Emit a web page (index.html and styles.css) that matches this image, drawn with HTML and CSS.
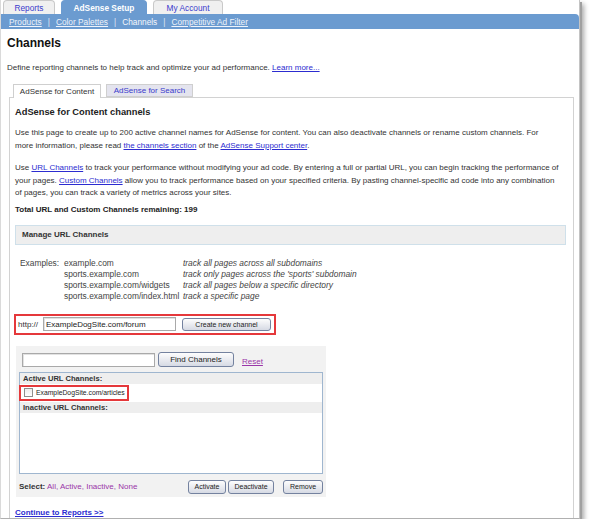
FILE: index.html
```html
<!DOCTYPE html>
<html>
<head>
<meta charset="utf-8">
<title>Channels</title>
<link rel="stylesheet" href="styles.css">
</head>
<body>
<div class="window">
  <div class="toptabs">
    <div class="ttab t1">Reports</div>
    <div class="ttab t2 on">AdSense Setup</div>
    <div class="ttab t3">My Account</div>
  </div>
  <div class="nav">
    <a class="navlink" href="#">Products</a><span class="sep">|</span>
    <a class="navlink" href="#">Color Palettes</a><span class="sep">|</span>
    <span class="navcur">Channels</span><span class="sep">|</span>
    <a class="navlink" href="#">Competitive Ad Filter</a>
  </div>
  <div class="main">
    <h1 class="title">Channels</h1>
    <div class="desc">Define reporting channels to help track and optimize your ad performance. <a class="link" href="#">Learn more...</a></div>
  </div>
  <div class="panelwrap">
    <div class="subtabs">
      <div class="stab s1 on">AdSense for Content</div>
      <div class="stab s2">AdSense for Search</div>
    </div>
    <div class="panel">
      <div class="sechead">AdSense for Content channels</div>
      <p class="para">Use this page to create up to 200 active channel names for AdSense for content. You can also deactivate channels or rename custom channels. For<br>more information, please read <a class="link" href="#">the channels section</a> of the <a class="link" href="#">AdSense Support center</a>.</p>
      <p class="para p2">Use <a class="link" href="#">URL Channels</a> to track your performance without modifying your ad code. By entering a full or partial URL, you can begin tracking the performance of<br>your pages. <a class="link" href="#">Custom Channels</a> allow you to track performance based on your specified criteria. By pasting channel-specific ad code into any combination<br>of pages, you can track a variety of metrics across your sites.</p>
      <div class="total">Total URL and Custom Channels remaining: 199</div>
      <div class="managebox">Manage URL Channels</div>
      <div class="examples">
        <span>Examples:</span><span>example.com</span><span class="ex">track all pages across all subdomains</span>
        <span></span><span>sports.example.com</span><span class="ex">track only pages across the 'sports' subdomain</span>
        <span></span><span>sports.example.com/widgets</span><span class="ex">track all pages below a specific directory</span>
        <span></span><span>sports.example.com/index.html</span><span class="ex">track a specific page</span>
      </div>
      <div class="createbox">
        <span class="http">http://</span>
        <span class="input urlinput">ExampleDogSite.com/forum</span>
        <span class="btn createbtn">Create new channel</span>
      </div>
      <div class="findbox">
        <div class="findrow">
          <span class="input findinput"></span>
          <span class="btn findbtn">Find Channels</span>
          <a class="visited reset" href="#">Reset</a>
        </div>
        <div class="listbox">
          <div class="listhead">Active URL Channels:</div>
          <div class="itemrow">
            <div class="item"><span class="check"></span><span class="itemtext">ExampleDogSite.com/articles</span></div>
          </div>
          <div class="listhead">Inactive URL Channels:</div>
        </div>
        <div class="selectrow">
          <div class="selecttext"><b>Select:</b> <span class="sellinks"><a href="#">All</a>, <a href="#">Active</a>, <a href="#">Inactive</a>, <a href="#">None</a></span></div>
          <div class="actions">
            <span class="btn sbtn b-act">Activate</span>
            <span class="btn sbtn b-deact">Deactivate</span>
            <span class="btn sbtn b-rem">Remove</span>
          </div>
        </div>
      </div>
      <a class="continue" href="#">Continue to Reports &gt;&gt;</a>
    </div>
  </div>
</div>
</body>
</html>
```

FILE: styles.css
```css
* { box-sizing: border-box; }
html, body { margin: 0; padding: 0; background: #fff; }
body {
  font-family: "Liberation Sans", Arial, sans-serif;
  font-size: 8px;
  color: #333;
}
a { text-decoration: underline; }
.link { color: #2c2cd0; }
.visited { color: #9a36a8; }

.window {
  width: 580px;
  height: 519px;
  border-left: 1px solid #dadada;
  border-right: 1px solid #c4c4c4;
  border-bottom: 1px solid #b0b0b0;
  box-shadow: 2px 2px 0 #a0a0a0, 4px 4px 5px rgba(0,0,0,0.35);
  overflow: hidden;
  background: #fff;
}

.toptabs {
  display: flex;
  gap: 6px;
  padding-left: 2px;
  height: 14px;
  align-items: flex-end;
}
.ttab {
  height: 14px;
  border: 1px solid #c9c9c9;
  border-bottom: 0;
  border-radius: 4px 4px 0 0;
  background: #f0f0f0;
  color: #3b3bcc;
  font-size: 8.3px;
  display: flex;
  align-items: center;
  justify-content: center;
  padding-top: 1px;
}
.t1 { width: 52px; }
.t2 { width: 86px; }
.t3 { width: 70px; }
.ttab.on {
  background: #6b9bd0;
  border-color: #6b9bd0;
  color: #fff;
  font-weight: bold;
}

.nav {
  height: 15px;
  background: #6b9bd0;
  border-radius: 0 4px 0 0;
  padding-left: 8px;
  display: flex;
  align-items: center;
  color: #eef3fb;
  font-size: 8.3px;
}
.navlink { color: #eef3fb; }
.navcur { color: #f4f7fc; }
.sep { margin: 0 6px; color: #e0e8f4; }

.main { padding-left: 6px; }
.title {
  margin: 7px 0 0;
  font-size: 12px;
  line-height: 14px;
  color: #111;
}
.desc {
  margin-top: 12px;
  line-height: 12px;
}

.panelwrap {
  margin: 10px 0 0 8px;
  width: 565px;
}
.subtabs {
  display: flex;
  gap: 5px;
  padding-left: 4px;
  height: 14px;
  margin-bottom: -1px;
  position: relative;
  z-index: 1;
}
.stab {
  height: 14px;
  border: 1px solid #cfcfcf;
  border-bottom: 0;
  display: flex;
  align-items: center;
  justify-content: center;
  font-size: 8px;
}
.s1 { width: 88px; background: #fff; color: #333; height: 14px; }
.s2 { width: 87px; background: #e4e4ee; color: #3a3acc; border-bottom: 1px solid #cfcfcf; height: 13px; }

.panel {
  border: 1px solid #d2d2d2;
  border-bottom: 0;
  height: 460px;
  padding: 0 6px 0 5px;
}
.sechead {
  margin-top: 8px;
  font-size: 9.3px;
  font-weight: bold;
  line-height: 12px;
  color: #222;
}
.para {
  margin: 9px 0 0;
  line-height: 12.5px;
  white-space: nowrap;
}
.p2 { margin-top: 10px; }
.total {
  margin-top: 4px;
  font-weight: bold;
  line-height: 12px;
  color: #222;
}
.managebox {
  margin-top: 9px;
  width: 551px;
  height: 20px;
  background: #eeeeee;
  border: 1px solid #cfe0ea;
  font-weight: bold;
  color: #333;
  padding-left: 6px;
  display: flex;
  align-items: center;
}

.examples {
  margin: 13px 0 0 5px;
  display: grid;
  grid-template-columns: 44px 119px auto;
  line-height: 11.3px;
  font-size: 8.4px;
  color: #444;
}
.ex { font-style: italic; }

.createbox {
  margin: 11px 0 0 -1px;
  width: 262px;
  height: 21px;
  border: 2px solid #e5383b;
  display: flex;
  align-items: center;
  padding-left: 2px;
}
.http { width: 25px; }
.input {
  display: inline-flex;
  align-items: center;
  border: 1px solid #a9a9a9;
  background: #fff;
  height: 14px;
  padding-left: 2px;
  box-shadow: inset 1px 1px 0 #e2e2e2;
}
.urlinput { width: 133px; font-size: 8px; color: #222; }
.btn {
  display: inline-flex;
  align-items: center;
  justify-content: center;
  border: 1px solid #74829f;
  border-radius: 3px;
  background: linear-gradient(#fdfdfd, #e6e8ee 60%, #d6dae4);
  color: #222;
  font-size: 7px;
}
.createbtn { width: 89px; height: 13px; margin-left: 6px; }

.findbox {
  margin: 11px 0 0 1px;
  width: 310px;
  height: 151px;
  background: #f2f2f2;
  padding: 6px 0 0 3px;
}
.findrow {
  display: flex;
  align-items: flex-end;
  height: 15px;
  padding-left: 3px;
}
.findinput { width: 133px; height: 14px; }
.findbtn { width: 76px; height: 15px; margin-left: 3px; font-size: 8px; }
.reset { margin-left: 8px; font-size: 8px; line-height: 10px; }

.listbox {
  margin-top: 5px;
  width: 304px;
  height: 102px;
  border: 1px solid #9fb6cf;
  background: #fff;
}
.listhead {
  height: 11px;
  background: #eeeeee;
  font-weight: bold;
  color: #333;
  font-size: 7.6px;
  line-height: 11px;
  padding-left: 3px;
}
.itemrow {
  height: 18px;
  padding-top: 1px;
}
.item {
  width: 110px;
  height: 16px;
  border: 2px solid #e5383b;
  margin-left: -1px;
  display: flex;
  align-items: center;
  padding-left: 3px;
}
.check {
  flex: 0 0 9px;
  width: 9px;
  height: 9px;
  border: 1px solid #8e8e8e;
  background: linear-gradient(#ececec, #fff);
}
.itemtext { margin-left: 3px; font-size: 6.8px; color: #222; white-space: nowrap; }

.selectrow {
  margin-top: 6px;
  width: 304px;
  display: flex;
  align-items: center;
  justify-content: space-between;
  height: 14px;
}
.selecttext { color: #333; }
.selecttext b { color: #333; }
.sellinks { color: #9a36a8; }
.sellinks a { color: #9a36a8; text-decoration: none; }
.actions { display: flex; gap: 2px; }
.sbtn { height: 14px; }
.b-act { width: 38px; }
.b-deact { width: 46px; }
.b-rem { width: 40px; margin-left: 7px; }

.continue {
  display: block;
  margin-top: 11px;
  color: #2c2cd0;
  font-weight: bold;
  line-height: 10px;
}
```
